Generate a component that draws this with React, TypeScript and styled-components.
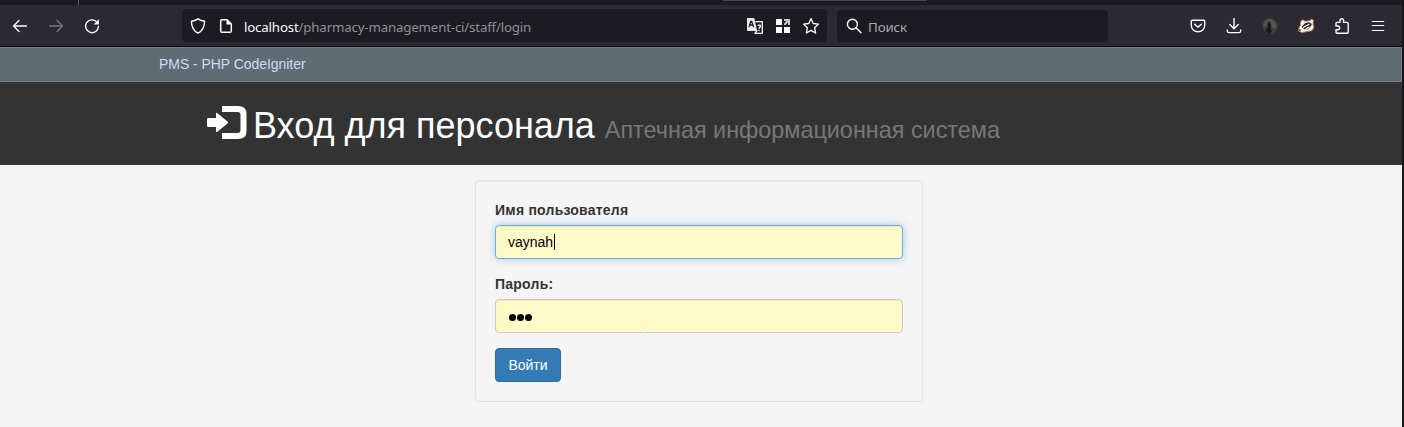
import React from "react";
import styled, { createGlobalStyle } from "styled-components";

const GlobalStyle = createGlobalStyle`
  * { box-sizing: border-box; }
  body { margin: 0; background: #f4f4f4; font-family: "Liberation Sans", Arial, sans-serif; font-size: 14px; line-height: 20px; color: #333; overflow: hidden; }
`;

const Window = styled.div`
  height: 427px;
  border-right: 2px solid #18181a;
  display: flex;
  flex-direction: column;
`;

const TabStrip = styled.div`
  height: 5px;
  flex: none;
  display: flex;
  align-items: flex-start;
  background: #1c1b22;
`;
const TabDivider = styled.span`
  width: 1px;
  height: 5px;
  margin-left: 78px;
  background: #5b5b64;
`;
const ActiveTab = styled.span`
  width: 204px;
  height: 1px;
  margin-left: 644px;
  background: #45444f;
`;

const Toolbar = styled.div`
  height: 42px;
  flex: none;
  display: flex;
  align-items: center;
  padding: 0 6px 0 2px;
  background: #2b2a33;
  border-bottom: 1px solid #0c0c0d;
`;
const ToolButton = styled.span<{ $dim?: boolean; $width?: number }>`
  width: ${(p) => p.$width ?? 36}px;
  height: 32px;
  flex: none;
  display: flex;
  align-items: center;
  justify-content: center;
  color: ${(p) => (p.$dim ? "#77767c" : "#fbfbfe")};
`;
const AddressBar = styled.div`
  width: 645px;
  height: 33px;
  margin-left: 72px;
  padding: 0 2px;
  display: flex;
  align-items: center;
  border-radius: 4px;
  background: #1c1b22;
`;
const Address = styled.span`
  flex: 1;
  padding: 3px 0 0 4px;
  font: 13.3px/20px "Noto Sans", sans-serif;
  letter-spacing: -0.18px;
  color: #8f8f94;
  white-space: nowrap;
`;
const Host = styled.span`
  color: #fbfbfe;
`;
const SearchBar = styled.div`
  width: 271px;
  height: 32px;
  margin: 1px auto 0 10px;
  padding-left: 2px;
  display: flex;
  align-items: center;
  border-radius: 4px;
  background: #1c1b22;
`;
const SearchHint = styled.span`
  padding-top: 2px;
  font: 13.3px/20px "Noto Sans", sans-serif;
  letter-spacing: -0.1px;
  color: #a9a9ae;
`;

const Navbar = styled.nav`
  height: 35px;
  flex: none;
  padding: 6px 0 0 159px;
  background: #5f6d73;
  border: 1px solid #708087;
  border-left: 0;
  color: #c8dcf4;
  letter-spacing: -0.05px;
`;
const Header = styled.header`
  height: 83px;
  flex: none;
  display: flex;
  padding: 24px 0 0 207px;
  background: #333;
`;
const Title = styled.h1`
  margin: 0 0 0 6px;
  font-size: 36px;
  line-height: 40px;
  font-weight: 400;
  color: #fff;
  white-space: nowrap;
`;
const Subtitle = styled.small`
  font-size: 23.4px;
  line-height: 1;
  color: #777;
`;

const Content = styled.main`
  flex: 1;
  padding: 15px 0 0 475px;
`;
const LoginForm = styled.form`
  width: 448px;
  height: 222px;
  padding: 19px;
  border: 1px solid #e3e3e3;
  border-radius: 4px;
  background: #f5f5f5;
  box-shadow: inset 0 1px 1px rgba(0, 0, 0, 0.05);
`;
const Label = styled.label`
  display: block;
  margin-bottom: 5px;
  font-weight: 700;
  letter-spacing: 0.23px;
`;
const Field = styled.div<{ $focused?: boolean }>`
  position: relative;
  height: 34px;
  margin-bottom: 15px;
  padding: 0 12px;
  display: flex;
  align-items: center;
  border: 1px solid ${(p) => (p.$focused ? "#66afe9" : "#ccc")};
  border-radius: 4px;
  background: #fffbc8;
  color: #000;
  box-shadow: inset 0 1px 1px rgba(0, 0, 0, 0.075)${(p) => (p.$focused ? ", 0 0 8px rgba(102, 175, 233, 0.6)" : "")};
`;
const Caret = styled.span`
  width: 1px;
  height: 16px;
  margin-left: 1px;
  background: #000;
`;
const Dots = styled.span`
  display: flex;
  gap: 1px;
  padding: 2px 0 0 1px;
`;
const Dot = styled.span`
  width: 7px;
  height: 7px;
  border-radius: 50%;
  background: #000;
`;
const Pointer = styled.svg`
  position: absolute;
  left: 144px;
  top: 23px;
`;
const Submit = styled.button`
  display: block;
  width: 66px;
  height: 34px;
  padding: 0;
  border: 1px solid #2e6da4;
  border-radius: 4px;
  background: #337ab7;
  color: #fff;
  font: 14px/20px "Liberation Sans", Arial, sans-serif;
`;

const Icon = ({ children, w = 1.3 }: { children: React.ReactNode; w?: number }) => (
  <svg width="16" height="16" viewBox="0 0 16 16" fill="none" stroke="currentColor" strokeWidth={w} strokeLinecap="round" strokeLinejoin="round">
    {children}
  </svg>
);

const SignInIcon = () => (
  <svg width="40" height="34" viewBox="0 0 40 34" fill="#fff">
    <path d="M15 0H31Q39.5 0 39.5 8V25Q39.5 33 31 33H15V27H30.5Q33.5 27 33.5 24V9Q33.5 6 30.5 6H15Z" />
    <path d="M1.2 12H9V7.8Q9 6 10.4 7.2L20.8 15.8Q21.6 16.5 20.8 17.2L10.4 25.8Q9 27 9 25.2V21H1.2Q0 21 0 19.8V13.2Q0 12 1.2 12Z" />
  </svg>
);

export default function App() {
  return (
    <Window>
      <GlobalStyle />
      <TabStrip>
        <TabDivider />
        <ActiveTab />
      </TabStrip>
      <Toolbar>
        <ToolButton><Icon><path d="M14.5 8H1.5M7 2.5 1.5 8 7 13.5" /></Icon></ToolButton>
        <ToolButton $dim><Icon><path d="M1.5 8h13M9 2.5 14.5 8 9 13.5" /></Icon></ToolButton>
        <ToolButton>
          <Icon w={1.4}>
            <path d="M12.6 3.8A6.4 6.4 0 1 0 14.4 8.5" />
            <path d="M14.9 1.2v5.2H9.7z" fill="currentColor" stroke="none" />
          </Icon>
        </ToolButton>
        <AddressBar>
          <ToolButton $width={28}>
            <Icon w={1.4}><path d="M8 .8Q11 2.8 14.6 3.2C14.5 9 12.6 12.8 8 15.2 3.4 12.8 1.5 9 1.4 3.2Q5 2.8 8 .8Z" /></Icon>
          </ToolButton>
          <ToolButton $width={28}>
            <Icon w={1.5}>
              <path d="M3.7 1.7H9L13.3 6V13Q13.3 14.3 12 14.3H4Q2.7 14.3 2.7 13V2.9Q2.7 1.7 3.7 1.7Z" />
              <path d="M8.5 1.5V6.5H13.5Z" fill="currentColor" stroke="none" />
            </Icon>
          </ToolButton>
          <Address><Host>localhost</Host>/pharmacy-management-ci/staff/login</Address>
          <ToolButton $width={28}>
            <Icon>
              <path d="M0 0H7.2L10.2 13H1Q0 13 0 12Z" fill="#e8e8ea" stroke="none" />
              <path d="M2.2 8.7 3.7 3.3H4.6L6.5 8.7M2.8 7H5.8" stroke="#1c1b22" strokeWidth="1.3" />
              <path d="M9 3.7H15.3V15.3H8L10 12.7M11.2 7.4Q13.7 6.4 13.4 8.5L12.1 10.3M12.1 12.3V12.5" />
            </Icon>
          </ToolButton>
          <ToolButton $width={28}>
            <Icon>
              <path d="M1 1h6v6H1zM1 9h6v6H1zM9 9h6v6H9z" fill="currentColor" stroke="none" />
              <path d="M9 1h6v6h-2V4.5L10.5 7H9V5.5L11.5 3H9z" fill="#c9c9cc" stroke="none" />
            </Icon>
          </ToolButton>
          <ToolButton $width={28}>
            <Icon><path d="m8 .6 2.2 4.9 5.2.6-3.8 3.6 1 5.3L8 12.4 3.4 15l1-5.3L.6 6.1l5.2-.6Z" /></Icon>
          </ToolButton>
        </AddressBar>
        <SearchBar>
          <ToolButton $width={29}>
            <Icon w={1.4}><circle cx="6.4" cy="6.2" r="5" /><path d="m10.2 10 4.8 4.7" /></Icon>
          </ToolButton>
          <SearchHint>Поиск</SearchHint>
        </SearchBar>
        <ToolButton>
          <Icon w={1.4}><path d="M2.3 2.2H13.7Q14.7 2.2 14.7 3.2V7.5A6.7 6.3 0 0 1 1.3 7.5V3.2Q1.3 2.2 2.3 2.2ZM4.7 6.2 8 9.2 11.3 6.2" /></Icon>
        </ToolButton>
        <ToolButton>
          <Icon w={1.4}><path d="M8 .5V10.5M3.8 6.6 8 10.7 12.2 6.6M1.3 12V13Q1.3 14.6 3 14.6H13Q14.7 14.6 14.7 13V12" /></Icon>
        </ToolButton>
        <ToolButton>
          <svg width="16" height="16" viewBox="0 0 16 16">
            <circle cx="8" cy="8" r="7.8" fill="#403e3b" />
            <path d="M2 5Q5-1 11 2L15 7 13 11 10 9 9 4 6 3 4 9 1 8Z" fill="#58544e" />
            <path d="M3 13 5.5 10 6 6 7.2 3.5 8.5 6V10L10 14 7 15.5Z" fill="#171719" />
          </svg>
        </ToolButton>
        <ToolButton>
          <svg width="18" height="16" viewBox="0 0 18 16">
            <path d="M1.5 11 3.5 7 4 3 6 1.8 8 3.3 12.5 2.8 15 1 16.5 2.5 16 6 16.8 9.5 15 12.7 10 13.5 5 14.5 1.5 13Z" fill="#f4f1ee" stroke="#c97d50" strokeWidth=".9" />
            <path d="M4.5 8.8 8 5.2 12 4.2 15 6 13.5 8.5 10.5 9 7.5 11.5Z" fill="#252326" />
            <path d="M6 9.5 12.5 6M4 6 6 4" stroke="#fff" strokeWidth="1.3" />
            <path d="M9.5 11.5 13 9.5" stroke="#77706d" />
            <path d="M1.5 11.5 3.5 11V13L2 12.8Z" fill="#222" />
          </svg>
        </ToolButton>
        <ToolButton>
          <Icon w={1.4}><path d="M2 8V5.4Q2 4.4 3 4.4H6V2.6A1.8 1.8 0 0 1 9.6 2.6V4.4H13.2Q14.2 4.4 14.2 5.4V14.2Q14.2 15.2 13.2 15.2H3Q2 15.2 2 14.2V11.7H3.8A1.8 1.8 0 0 0 3.8 8Z" /></Icon>
        </ToolButton>
        <ToolButton>
          <Icon w={1.2}><path d="M2.3 3.5H13.7M2.3 7.5H13.7M2.3 12.5H13.7" /></Icon>
        </ToolButton>
      </Toolbar>
      <Navbar>PMS - PHP CodeIgniter</Navbar>
      <Header>
        <SignInIcon />
        <Title>Вход для персонала <Subtitle>Аптечная информационная система</Subtitle></Title>
      </Header>
      <Content>
        <LoginForm>
          <Label>Имя пользователя</Label>
          <Field $focused>vaynah<Caret /></Field>
          <Label>Пароль:</Label>
          <Field>
            <Dots><Dot /><Dot /><Dot /></Dots>
            <Pointer width="8" height="15" viewBox="0 0 8 15">
              <path d="M1 .5H3M4 1.5V13M5 .5H7M1 14H3M5 14H7" fill="none" stroke="#f3f3ee" />
            </Pointer>
          </Field>
          <Submit type="button">Войти</Submit>
        </LoginForm>
      </Content>
    </Window>
  );
}
